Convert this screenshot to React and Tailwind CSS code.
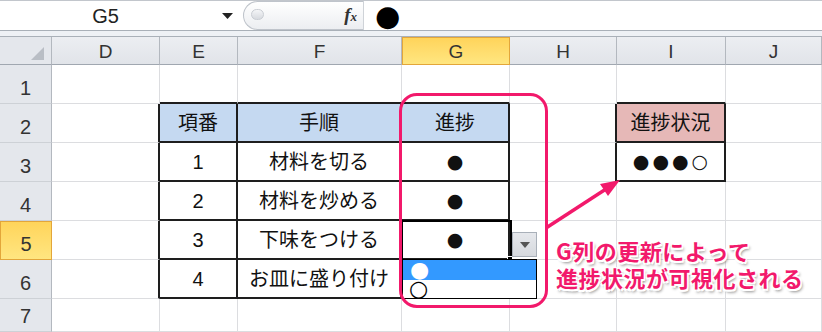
import React from "react";

const COLS = ["D", "E", "F", "G", "H", "I", "J"];
const ROWS = [1, 2, 3, 4, 5, 6, 7];

const DATA = {
  E2: "項番", F2: "手順", G2: "進捗",
  E3: "1", F3: "材料を切る", G3: "●",
  E4: "2", F4: "材料を炒める", G4: "●",
  E5: "3", F5: "下味をつける", G5: "●",
  E6: "4", F6: "お皿に盛り付け",
  I2: "進捗状況", I3: "●●●○",
};

function SheetCell({ r, c }) {
  const inT1 = r >= 2 && r <= 6 && (c === "E" || c === "F" || c === "G");
  const inT2 = r >= 2 && r <= 3 && c === "I";
  const inT = inT1 || inT2;
  const leftOfT = (c === "D" && r >= 2 && r <= 6) || (c === "H" && r >= 2 && r <= 3);
  const aboveT = r === 1 && (c === "E" || c === "F" || c === "G" || c === "I");
  const right = inT || leftOfT ? "border-r-2 border-r-[#1e1e1e]" : "border-r border-r-[#dcdde0]";
  const bottom = inT || aboveT ? "border-b-2 border-b-[#1e1e1e]" : "border-b border-b-[#dcdde0]";
  let bg = "bg-white";
  if (r === 2 && (c === "E" || c === "F" || c === "G")) bg = "bg-[#c5d9f1]";
  if (r === 2 && c === "I") bg = "bg-[#e6b8b7]";
  const key = c + r;
  const v = DATA[key];
  const isDot = v && (v.includes("●") || v.includes("○"));
  return (
    <div className={`${right} ${bottom} ${bg} flex items-center justify-center overflow-visible whitespace-nowrap text-[#111]`}>
      {v ? (
        isDot ? (
          <span className="font-['DejaVu_Sans',sans-serif] text-[19px] leading-[1.2] tracking-[3px] pl-[3px]">{v}</span>
        ) : (
          <span className="font-['Liberation_Sans','Noto_Sans_CJK_JP',sans-serif] text-[20px] leading-[1.2]">{v}</span>
        )
      ) : null}
    </div>
  );
}

export default function App() {
  return (
    <div className="relative w-[822px] h-[332px] overflow-hidden bg-white font-['Liberation_Sans','Noto_Sans_CJK_JP',sans-serif]">
      {/* formula bar */}
      <div className="h-[30px] flex border-t border-t-[#c2c6cc] bg-white">
        <div className="w-[243px] flex items-center">
          <div className="w-[211px] text-center text-[20px] leading-[1.2] text-[#222]">G5</div>
          <div className="w-[32px] flex justify-center">
            <svg width="11" height="6" viewBox="0 0 11 6">
              <path d="M0 0 L11 0 L5.5 6 Z" fill="#222" />
            </svg>
          </div>
        </div>
        <div className="w-[120px] h-[29px] rounded-l-full border border-[#bfc4cb] border-r-0 bg-gradient-to-b from-white to-[#eceef1] flex items-center justify-between pl-[7px] pr-[6px]">
          <div className="w-[13px] h-[11px] rounded-full border border-[#c9cdd3] bg-gradient-to-b from-[#f4f5f7] to-[#d7dadf] -mt-[3px]" />
          <span className="font-['Liberation_Serif',serif] italic font-bold text-[19px] leading-[1.2] text-[#333]">
            f<span className="text-[13px]">x</span>
          </span>
        </div>
        <div className="w-px bg-[#cfd3d8]" />
        <div className="flex-1 flex items-center pl-[11px]">
          <span className="font-['DejaVu_Sans',sans-serif] text-[29px] leading-[28px] text-black">●</span>
        </div>
      </div>
      <div className="h-[7px] border-t border-b border-[#a9b0b8] bg-[#eef1f5]" />

      {/* sheet grid */}
      <div className="grid grid-cols-[52px_108px_78px_164px_108px_107px_109px_96px] grid-rows-[28px_39px_39px_39px_39px_39px_39px_33px]">
        <div className="bg-[#e4e7ec] border-r border-r-[#b3b8bf] border-b border-b-[#a0a7b0] relative">
          <svg className="absolute right-[7px] bottom-[4px]" width="13" height="13" viewBox="0 0 13 13">
            <path d="M13 0 L13 13 L0 13 Z" fill="#b9bec5" />
          </svg>
        </div>
        {COLS.map((c) =>
          c === "G" ? (
            <div key={c} className="bg-gradient-to-b from-[#ffd45a] to-[#ffe680] border border-[#e3a63a] flex items-center justify-center text-[19px] text-[#333] pt-[3px]">
              {c}
            </div>
          ) : (
            <div key={c} className="bg-gradient-to-b from-[#eceef2] to-[#e1e4e9] border-r border-r-[#b3b8bf] border-b border-b-[#a0a7b0] flex items-center justify-center text-[19px] text-[#333] pt-[3px]">
              {c}
            </div>
          )
        )}
        {ROWS.map((r) => (
          <React.Fragment key={r}>
            {r === 5 ? (
              <div className="bg-gradient-to-b from-[#ffd45a] to-[#ffe680] border border-[#e3a63a] flex items-end justify-center text-[20px] leading-none text-[#333] pb-[5px]">
                {r}
              </div>
            ) : (
              <div className="bg-[#e4e7ec] border-r border-r-[#b3b8bf] border-b border-b-[#cdd1d6] flex items-end justify-center text-[20px] leading-none text-[#333] pb-[5px]">
                {r}
              </div>
            )}
            {COLS.map((c) => (
              <SheetCell key={c + r} r={r} c={c} />
            ))}
          </React.Fragment>
        ))}
      </div>

      {/* active cell G5 */}
      <div className="absolute left-[401px] top-[220px] w-[111px] h-[41px] border-2 border-black pointer-events-none" />
      <div className="absolute left-[507px] top-[256px] w-[6px] h-[6px] bg-black border border-white" />

      {/* dropdown button */}
      <div className="absolute left-[512px] top-[232px] w-[25px] h-[25px] bg-gradient-to-b from-[#e6e8ec] to-[#d6d9de] border border-[#a9b0b9] flex items-center justify-center">
        <svg width="10" height="6" viewBox="0 0 10 6">
          <path d="M0 0 L10 0 L5 6 Z" fill="#555" />
        </svg>
      </div>

      {/* dropdown list */}
      <div className="absolute left-[402px] top-[259px] w-[135px] h-[40px] border border-black bg-white flex flex-col">
        <div className="h-[20px] shrink-0 bg-[#3399ff] flex items-center pl-[7px]">
          <span className="font-['DejaVu_Sans',sans-serif] text-[22px] leading-[20px] text-white">●</span>
        </div>
        <div className="h-[18px] shrink-0 flex items-center pl-[6px]">
          <span className="font-['DejaVu_Sans',sans-serif] text-[22px] leading-[18px] text-black">○</span>
        </div>
      </div>

      {/* pink rounded highlight */}
      <div className="absolute left-[399px] top-[93px] w-[149px] h-[215px] border-[3px] border-[#f2196b] rounded-[18px] pointer-events-none" />

      {/* arrow */}
      <svg className="absolute left-0 top-0 pointer-events-none" width="822" height="332" viewBox="0 0 822 332">
        <line x1="546" y1="228" x2="606" y2="189" stroke="#f2196b" strokeWidth="3.5" />
        <polygon points="620,180 608,196 600,184" fill="#f2196b" />
      </svg>

      {/* callout text */}
      <div className="absolute left-[556px] top-[237px] font-['Noto_Sans_CJK_JP',sans-serif] font-bold text-[22px] leading-[26.5px] tracking-[0.5px] text-[#f2196b] whitespace-nowrap [text-shadow:-1.5px_-1.5px_0_#fff,1.5px_-1.5px_0_#fff,-1.5px_1.5px_0_#fff,1.5px_1.5px_0_#fff,0_0_2px_#fff,2px_3px_3px_rgba(0,0,0,0.45)]">
        <div>G列の更新によって</div>
        <div>進捗状況が可視化される</div>
      </div>
    </div>
  );
}
